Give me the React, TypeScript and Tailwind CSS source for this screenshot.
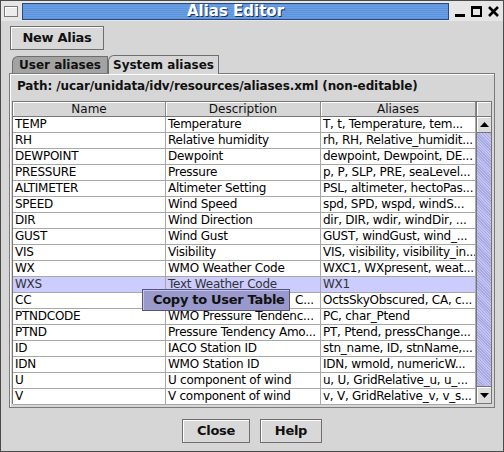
const rows: [string, string, string][] = [
  ['TEMP', 'Temperature', 'T, t, Temperature, tem...'],
  ['RH', 'Relative humidity', 'rh, RH, Relative_humidit...'],
  ['DEWPOINT', 'Dewpoint', 'dewpoint, Dewpoint, DE...'],
  ['PRESSURE', 'Pressure', 'p, P, SLP, PRE, seaLevel...'],
  ['ALTIMETER', 'Altimeter Setting', 'PSL, altimeter, hectoPas...'],
  ['SPEED', 'Wind Speed', 'spd, SPD, wspd, windS...'],
  ['DIR', 'Wind Direction', 'dir, DIR, wdir, windDir, ...'],
  ['GUST', 'Wind Gust', 'GUST, windGust, wind_...'],
  ['VIS', 'Visibility', 'VIS, visibility, visibility_in...'],
  ['WX', 'WMO Weather Code', 'WXC1, WXpresent, weat...'],
  ['WXS', 'Text Weather Code', 'WX1'],
  ['CC', 'C...', 'OctsSkyObscured, CA, c...'],
  ['PTNDCODE', 'WMO Pressure Tendenc...', 'PC, char_Ptend'],
  ['PTND', 'Pressure Tendency Amo...', 'PT, Ptend, pressChange...'],
  ['ID', 'IACO Station ID', 'stn_name, ID, stnName,...'],
  ['IDN', 'WMO Station ID', 'IDN, wmoId, numericW...'],
  ['U', 'U component of wind', 'u, U, GridRelative_u, u_...'],
  ['V', 'V component of wind', 'v, V, GridRelative_v, v_s...'],
];

const Button = ({ label, className }: { label: string; className: string }) => (
  <div
    className={`flex items-center justify-center border border-[#6e6e6e] bg-[#d8d8d8] text-[13px] font-bold tracking-[-0.3px] text-[#111] shadow-[inset_1px_1px_0_#fff] ${className}`}
  >
    {label}
  </div>
);

const Cell = ({ text, selected, indent }: { text: string; selected: boolean; indent?: boolean }) => (
  <div
    className={`h-[16px] overflow-hidden whitespace-nowrap border-b border-r border-[#a8a8a8] leading-[15px] tracking-[-0.25px] ${
      indent ? 'pl-[129px]' : 'pl-[2px]'
    } ${selected ? 'bg-[#ccccff] text-[#333]' : 'bg-white text-black'}`}
  >
    {text}
  </div>
);

export default function App() {
  return (
    <div
      className="relative flex h-[452px] w-[504px] flex-col overflow-hidden border border-[#4a4a4a] bg-[#d6d6d6] text-[12px]"
      style={{ fontFamily: '"DejaVu Sans", sans-serif' }}
    >
      {/* title bar */}
      <div className="flex h-[20px] items-center gap-[4px] bg-[#e6e6e6] px-[3px]">
        <div className="h-[11px] w-[14px] border border-[#777] bg-[#ececec] shadow-[inset_1px_1px_0_#fff]" />
        <div className="flex h-[17px] flex-1 items-center justify-center border border-[#2b4a7a] bg-[repeating-linear-gradient(180deg,#5d93dc_0px,#5d93dc_1px,#6b9fe4_1px,#6b9fe4_2px)] text-[15px] font-bold text-white [text-shadow:1px_1px_0_#1b3157]">
          Alias Editor
        </div>
        <div className="flex items-center gap-[6px] pl-[2px] pr-[1px]">
          <div className="mt-[8px] h-[3px] w-[10px] bg-black" />
          <div className="h-[11px] w-[11px] border-2 border-t-[3px] border-black" />
          <svg width="11" height="11" viewBox="0 0 11 11">
            <path d="M1 1 L10 10 M10 1 L1 10" stroke="#000" strokeWidth="2.6" />
          </svg>
        </div>
      </div>

      {/* body */}
      <div className="flex flex-1 flex-col px-[8px] pt-[5px]">
        <Button label="New Alias" className="ml-[1px] h-[24px] w-[94px]" />

        {/* tabs */}
        <div className="mt-[5px] flex items-end pl-[3px]">
          <div className="flex h-[17px] w-[96px] items-center justify-center rounded-tl-[6px] border border-b-0 border-[#6e6e6e] bg-[#a3a3a3] text-[12px] font-bold text-[#111]">
            User aliases
          </div>
          <div className="relative -mb-px flex h-[19px] w-[111px] items-center justify-center rounded-tl-[6px] border border-b-0 border-[#6e6e6e] bg-[#d6d6d6] text-[12px] font-bold text-[#111]">
            System aliases
          </div>
        </div>

        {/* panel */}
        <div className="flex h-[335px] flex-col border border-[#7a7a7a] px-[2px] shadow-[inset_1px_1px_0_#fff]">
          <div className="flex h-[23px] items-center pl-[5px] pt-[1px] font-bold tracking-[-0.1px] text-[#111]">
            Path: /ucar/unidata/idv/resources/aliases.xml (non-editable)
          </div>
          <div className="mt-[4px] flex h-[303px] border border-[#777]">
            <div className="flex w-[463px] flex-col">
              <div className="grid h-[15px] grid-cols-[153px_155px_155px] border-b border-[#777] bg-[#d6d6d6] text-center leading-[14px] text-[#111]">
                <div className="border-r border-[#888] shadow-[inset_1px_1px_0_#fff]">Name</div>
                <div className="border-r border-[#888] shadow-[inset_1px_1px_0_#fff]">Description</div>
                <div className="border-r border-[#888] shadow-[inset_1px_1px_0_#fff]">Aliases</div>
              </div>
              <div className="grid grid-cols-[153px_155px_155px]">
                {rows.map(([n, d, a]) => {
                  const sel = n === 'WXS';
                  return [
                    <Cell key={n + 'n'} text={n} selected={sel} />,
                    <Cell key={n + 'd'} text={d} selected={sel} indent={n === 'CC'} />,
                    <Cell key={n + 'a'} text={a} selected={sel} />,
                  ];
                })}
              </div>
            </div>
            {/* scrollbar */}
            <div className="flex w-[17px] flex-col border-l border-[#777]">
              <div className="h-[15px] border-b border-[#777] bg-[#d6d6d6] shadow-[inset_1px_1px_0_#fff]" />
              <div className="flex h-[16px] items-center justify-center border-b border-[#777] bg-[#dcdcdc] shadow-[inset_1px_1px_0_#fff]">
                <svg width="9" height="5" viewBox="0 0 9 5">
                  <path d="M0 5 L4.5 0 L9 5 Z" fill="#000" />
                </svg>
              </div>
              <div className="flex-1 border-b border-[#777] bg-[repeating-linear-gradient(45deg,#a9a9e2_0px,#a9a9e2_1px,#c4c4f4_1px,#c4c4f4_2px)]" />
              <div className="flex h-[16px] items-center justify-center bg-[#dcdcdc] shadow-[inset_1px_1px_0_#fff]">
                <svg width="9" height="5" viewBox="0 0 9 5">
                  <path d="M0 0 L4.5 5 L9 0 Z" fill="#000" />
                </svg>
              </div>
            </div>
          </div>
        </div>

        {/* bottom buttons */}
        <div className="mt-[11px] flex justify-center gap-[10px]">
          <Button label="Close" className="h-[24px] w-[68px]" />
          <Button label="Help" className="h-[24px] w-[62px]" />
        </div>
      </div>

      {/* context menu */}
      <div className="absolute left-[141px] top-[288px] flex h-[22px] w-[148px] items-center whitespace-nowrap border border-[#55557a] bg-[#9999cc] pl-[10px] text-[13px] font-bold tracking-[-0.3px] text-[#111] shadow-[inset_1px_1px_0_#c4c4ee]">
        Copy to User Table
      </div>
    </div>
  );
}
